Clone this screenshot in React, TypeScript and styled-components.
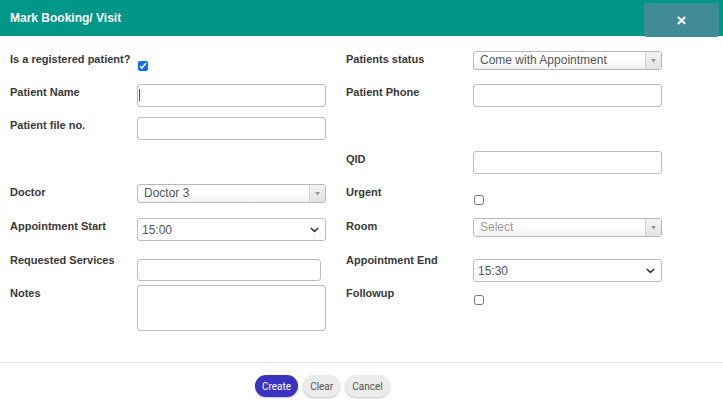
import React from "react";
import styled, { createGlobalStyle } from "styled-components";

const GlobalStyle = createGlobalStyle`
  html, body {
    margin: 0;
    padding: 0;
    background: #fff;
  }
  body {
    font-family: "Liberation Sans", Arial, sans-serif;
  }
`;

export default function App() {
  return (
    <>
      <GlobalStyle />
      <Modal>
        <Header>
          <Title>Mark Booking/ Visit</Title>
          <CloseButton>×</CloseButton>
        </Header>

        <Body>
          {/* row 1 */}
          <Label>Is a registered patient?</Label>
          <Field $offset={10}>
            <Check type="checkbox" defaultChecked />
          </Field>
          <span />
          <Label>Patients status</Label>
          <Field>
            <Select2>
              <Select2Text>Come with Appointment</Select2Text>
              <Select2Arrow><Triangle /></Select2Arrow>
            </Select2>
          </Field>

          {/* row 2 */}
          <Label>Patient Name</Label>
          <Field>
            <InputWrap>
              <TextInput />
              <Caret />
            </InputWrap>
          </Field>
          <span />
          <Label>Patient Phone</Label>
          <Field>
            <TextInput />
          </Field>

          {/* row 3 */}
          <Label>Patient file no.</Label>
          <Field>
            <TextInput />
          </Field>
          <span />
          <span />
          <span />

          {/* row 4 */}
          <span />
          <span />
          <span />
          <Label>QID</Label>
          <Field>
            <TextInput />
          </Field>

          {/* row 5 */}
          <Label>Doctor</Label>
          <Field>
            <Select2>
              <Select2Text>Doctor 3</Select2Text>
              <Select2Arrow><Triangle /></Select2Arrow>
            </Select2>
          </Field>
          <span />
          <Label>Urgent</Label>
          <Field $offset={11}>
            <Check type="checkbox" />
          </Field>

          {/* row 6 */}
          <Label>Appointment Start</Label>
          <Field>
            <NativeSelect>
              <span>15:00</span>
              <Chevron />
            </NativeSelect>
          </Field>
          <span />
          <Label>Room</Label>
          <Field>
            <Select2>
              <Select2Text $placeholder>Select</Select2Text>
              <Select2Arrow><Triangle /></Select2Arrow>
            </Select2>
          </Field>

          {/* row 7 */}
          <Label>Requested Services</Label>
          <Field $offset={7}>
            <TextInput $width={184} $height={22} />
          </Field>
          <span />
          <Label>Appointment End</Label>
          <Field $offset={7}>
            <NativeSelect>
              <span>15:30</span>
              <Chevron />
            </NativeSelect>
          </Field>

          {/* row 8 */}
          <Label>Notes</Label>
          <Field>
            <TextArea />
          </Field>
          <span />
          <Label>Followup</Label>
          <Field $offset={10}>
            <Check type="checkbox" />
          </Field>
        </Body>

        <Footer>
          <Button $primary>Create</Button>
          <Button>Clear</Button>
          <Button>Cancel</Button>
        </Footer>
      </Modal>
    </>
  );
}

function Triangle() {
  return (
    <svg width="5" height="4" viewBox="0 0 5 4">
      <path d="M0 0 L5 0 L2.5 3.5 Z" fill="#999" />
    </svg>
  );
}

function Chevron() {
  return (
    <svg width="9" height="6" viewBox="0 0 9 6">
      <path d="M1.2 1.2 L4.5 4.5 L7.8 1.2" fill="none" stroke="#333" strokeWidth="1.5" strokeLinecap="round" strokeLinejoin="round" />
    </svg>
  );
}

const Modal = styled.div`
  width: 723px;
  height: 406px;
  display: flex;
  flex-direction: column;
  background: #fff;
`;

const Header = styled.div`
  height: 36px;
  background: #009688;
  display: flex;
  align-items: flex-start;
  justify-content: space-between;
  padding: 0 4px 0 10px;
  box-sizing: border-box;
  position: relative;
  z-index: 1;
`;

const Title = styled.h4`
  margin: 0;
  line-height: 36px;
  font-size: 12px;
  font-weight: 700;
  color: #fff;
`;

const CloseButton = styled.button`
  margin-top: 3px;
  width: 75px;
  height: 34px;
  border: none;
  border-radius: 3px;
  background: #408b95;
  color: #fff;
  font-size: 17px;
  font-weight: 700;
  font-family: "Liberation Sans", Arial, sans-serif;
  line-height: 1;
  padding: 0;
`;

const Body = styled.div`
  display: grid;
  grid-template-columns: 127px 189px 20px 127px 189px;
  grid-template-rows: 33px 33px 34px 33px 34px 34px 33px 77px;
  padding: 15px 0 0 10px;
  height: 311px;
  box-sizing: border-box;
`;

const Label = styled.label`
  font-size: 11px;
  font-weight: 700;
  color: #383838;
  line-height: 14px;
  padding-top: 1px;
  white-space: nowrap;
`;

const Field = styled.div<{ $offset?: number }>`
  padding-top: ${(p) => p.$offset ?? 0}px;
`;

const InputWrap = styled.div`
  position: relative;
  width: 189px;
`;

const TextInput = styled.input<{ $width?: number; $height?: number }>`
  display: block;
  width: ${(p) => p.$width ?? 189}px;
  height: ${(p) => p.$height ?? 23}px;
  box-sizing: border-box;
  border: 1px solid #bdbdbd;
  border-radius: 3px;
  background: #fff;
  padding: 0 6px;
  font-size: 12px;
  outline: none;
`;

const Caret = styled.span`
  position: absolute;
  left: 2px;
  top: 5px;
  width: 1px;
  height: 12px;
  background: #555;
`;

const TextArea = styled.textarea`
  display: block;
  width: 189px;
  height: 46px;
  box-sizing: border-box;
  border: 1px solid #bdbdbd;
  border-radius: 3px;
  resize: none;
  margin: 0;
  outline: none;
`;

const Check = styled.input`
  display: block;
  width: 10px;
  height: 10px;
  margin: 0 0 0 1px;
  accent-color: #0b6ff2;
`;

const Select2 = styled.div`
  width: 189px;
  height: 19px;
  box-sizing: border-box;
  border: 1px solid #b8b8b8;
  border-radius: 3px;
  background: linear-gradient(#fff 40%, #f1f1f1);
  display: flex;
  align-items: stretch;
  overflow: hidden;
`;

const Select2Text = styled.span<{ $placeholder?: boolean }>`
  flex: 1;
  padding-left: 6px;
  font-size: 12px;
  line-height: 17px;
  color: ${(p) => (p.$placeholder ? "#999" : "#555")};
`;

const Select2Arrow = styled.span`
  width: 15px;
  border-left: 1px solid #d0d0d0;
  background: linear-gradient(#f4f4f4, #e2e2e2);
  display: flex;
  align-items: center;
  justify-content: center;
`;

const NativeSelect = styled.div`
  width: 189px;
  height: 23px;
  box-sizing: border-box;
  border: 1px solid #bdbdbd;
  border-radius: 3px;
  background: #fff;
  display: flex;
  align-items: center;
  justify-content: space-between;
  padding: 0 6px 0 4px;
  font-size: 12px;
  color: #555;
`;

const Footer = styled.div`
  border-top: 1px solid #e5e5e5;
  margin-top: 15px;
  padding: 12px 0 0 255px;
  display: flex;
  gap: 5px;
`;

const Button = styled.button<{ $primary?: boolean }>`
  height: 22px;
  padding: 0 7px;
  border: none;
  border-radius: 11px;
  font-family: Roboto, "Liberation Sans", sans-serif;
  font-size: 10px;
  background: ${(p) => (p.$primary ? "#3a33c1" : "#ececec")};
  color: ${(p) => (p.$primary ? "#fff" : "#555")};
  box-shadow: 0 1px 2px rgba(0, 0, 0, 0.25);
`;
